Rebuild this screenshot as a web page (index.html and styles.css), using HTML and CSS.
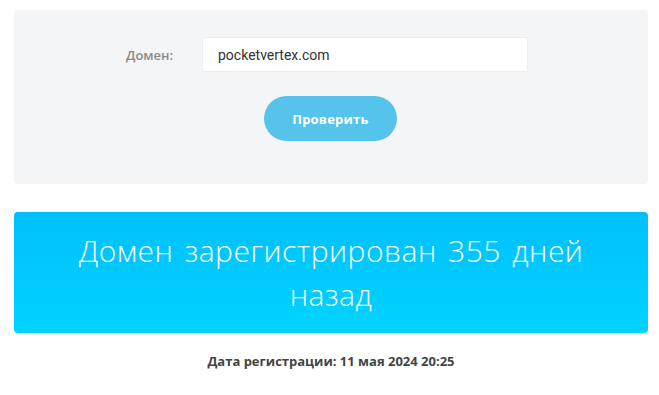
FILE: index.html
```html
<!DOCTYPE html>
<html lang="ru">
<head>
    <meta charset="UTF-8">
    <title>Возраст домена</title>
    <link rel="stylesheet" href="styles.css">
</head>
<body>
    <div class="check-form">
        <div class="form-row">
            <label class="form-label" for="domain">Домен:</label>
            <input type="text" id="domain" class="form-input" value="pocketvertex.com">
        </div>
        <div class="form-actions">
            <button class="btn-check">Проверить</button>
        </div>
    </div>

    <div class="result-box">
        <h2 class="result-title">Домен зарегистрирован 355 дней назад</h2>
    </div>

    <p class="result-date">Дата регистрации: 11 мая 2024 20:25</p>
</body>
</html>
```

FILE: styles.css
```css
* {
    margin: 0;
    padding: 0;
    box-sizing: border-box;
}

body {
    font-family: 'Open Sans', 'Noto Sans', sans-serif;
    background: #fff;
    padding: 10px 11px 0 14px;
    color: #444;
}

.check-form {
    background-color: #f3f5f6;
    border-radius: 4px;
    height: 174px;
    padding-top: 27px;
}

.form-row {
    display: flex;
    align-items: center;
}

.form-label {
    width: 188px;
    padding-left: 112px;
    font-size: 13px;
    font-weight: 600;
    color: #8a8a8a;
}

.form-input {
    width: 326px;
    height: 35px;
    border: 1px solid #eceeef;
    border-radius: 2px;
    background: #fff;
    padding: 0 15px;
    font-family: 'Roboto', sans-serif;
    font-size: 14px;
    color: #333;
    outline: none;
}

.form-actions {
    display: flex;
    justify-content: center;
    margin-top: 24px;
    padding-right: 1px;
}

.btn-check {
    width: 133px;
    height: 45px;
    border: none;
    border-radius: 23px;
    background-color: #55c3eb;
    color: #fff;
    font-family: 'Open Sans', sans-serif;
    font-size: 13px;
    font-weight: 700;
    letter-spacing: 0.2px;
    cursor: pointer;
}

.result-box {
    margin-top: 28px;
    height: 121px;
    border-radius: 4px;
    background: linear-gradient(#00c0fb, #00d3ff);
    display: flex;
    align-items: center;
    justify-content: center;
    padding: 0 50px;
}

.result-title {
    font-size: 30px;
    font-weight: 300;
    line-height: 44px;
    letter-spacing: 0.5px;
    word-spacing: 3px;
    color: #fff;
    text-align: center;
}

.result-date {
    margin-top: 19px;
    text-align: center;
    font-size: 13px;
    font-weight: 700;
    color: #444;
}
```
